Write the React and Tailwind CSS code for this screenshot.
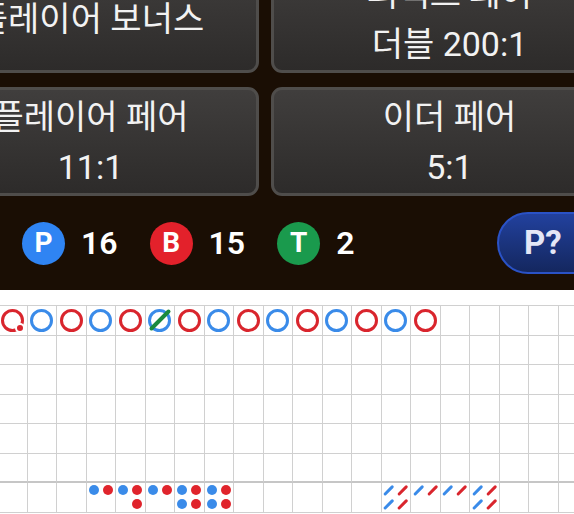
const font = { fontFamily: 'Roboto, "Noto Sans CJK KR", sans-serif' };

// big road: first row of the grid
const bigRoad = [
  { c: 'r', pair: true },
  { c: 'b' },
  { c: 'r' },
  { c: 'b' },
  { c: 'r' },
  { c: 'b', tie: true },
  { c: 'r' },
  { c: 'b' },
  { c: 'r' },
  { c: 'b' },
  { c: 'r' },
  { c: 'b' },
  { c: 'r' },
  { c: 'b' },
  { c: 'r' },
];

// small road columns (start at cell 3), cockroach columns (start at cell 13)
const smallRoad = [['b'], ['r'], ['b'], ['r', 'r'], ['b'], ['r'], ['b', 'b'], ['r', 'r'], ['b', 'b'], ['r', 'r']];
const roach = [['b', 'b'], ['r', 'r'], ['b'], ['r'], ['b'], ['r'], ['b', 'b'], ['r', 'r']];

const COLS = 20;
const ROWS = 7;

const BetButton = ({ lines }) => (
  <div className="h-[109px] rounded-[11px] border-[3px] border-[#4f4d4b] bg-linear-to-b from-[#403e3d] to-[#2d2b2a] flex flex-col items-center justify-center gap-[14px] text-[#f2f2f2] text-[34px] leading-[36px]">
    {lines.map((l) => (
      <span key={l} className="whitespace-nowrap">{l}</span>
    ))}
  </div>
);

const Badge = ({ letter, bg, count }) => (
  <div className="flex items-center gap-[16px]">
    <div className={`w-[43px] h-[43px] rounded-full ${bg} flex items-center justify-center text-white text-[28px] font-bold`}>
      {letter}
    </div>
    <span className="text-white text-[32px] font-semibold">{count}</span>
  </div>
);

const Ring = ({ c, pair, tie }) => (
  <div className="relative flex items-center justify-center">
    <div className={`w-[23px] h-[23px] rounded-full border-[3.5px] ${c === 'r' ? 'border-[#d9252d]' : 'border-[#3a8be9]'}`} />
    {tie && <div className="absolute w-[28px] h-[4px] rounded-sm bg-[#1b8a3d] -rotate-45" />}
    {pair && <div className="absolute left-[14px] top-[14px] w-[10px] h-[10px] rounded-full bg-[#d9252d] border-[2px] border-white" />}
  </div>
);

const Dot = ({ c }) => (
  <div className={`w-[10px] h-[10px] rounded-full ${c === 'r' ? 'bg-[#e0242c]' : 'bg-[#3a8be9]'}`} />
);

const Slash = ({ c }) => (
  <div className={`w-[13px] h-[2.5px] rounded-full -rotate-45 ${c === 'r' ? 'bg-[#d9252d]' : 'bg-[#3a8be9]'}`} />
);

const DerivedCell = ({ data, start, cell }) => {
  const i = cell - start;
  const cols = [data[i * 2], data[i * 2 + 1]];
  return (
    <div className="grid grid-cols-2 grid-rows-2 w-full h-full">
      {[0, 1].map((r) =>
        [0, 1].map((s) => (
          <div key={`${r}-${s}`} className="flex items-center justify-center">
            {cols[s] && cols[s][r] && (data === smallRoad ? <Dot c={cols[s][r]} /> : <Slash c={cols[s][r]} />)}
          </div>
        ))
      )}
    </div>
  );
};

export default function App() {
  return (
    <div className="w-[574px] h-[514px] overflow-hidden bg-white" style={font}>
      <div className="bg-[#1a0e04] h-[290px] overflow-hidden">
        <div className="-mt-[36px] -ml-[78px] w-[706px] grid grid-cols-[337px_357px] gap-x-[12px] gap-y-[14px]">
          <BetButton lines={['플레이어 보너스']} />
          <BetButton lines={['퍼펙트 페어', '더블 200:1']} />
          <BetButton lines={['플레이어 페어', '11:1']} />
          <BetButton lines={['이더 페어', '5:1']} />
        </div>
        <div className="h-[94px] flex items-center pl-[22px]">
          <div className="flex items-center gap-[32px]">
            <Badge letter="P" bg="bg-[#2f84f3]" count="16" />
            <Badge letter="B" bg="bg-[#e3212b]" count="15" />
            <Badge letter="T" bg="bg-[#1a9a4d]" count="2" />
          </div>
          <div className="ml-auto -mr-[60px] w-[137px] h-[62px] rounded-full border-2 border-[#2a52c6] bg-linear-to-b from-[#22419e] to-[#14275f] flex items-center pl-[25px] text-[#e4e7f6] text-[33px] font-bold">
            P?
          </div>
        </div>
      </div>
      <div className="pt-[15px] -ml-[3px]">
        <div className="grid grid-cols-[repeat(20,29.5px)] border-t-[1.5px] border-l-[1.5px] border-[#d0d0d0]">
          {Array.from({ length: ROWS * COLS }).map((_, idx) => {
            const row = Math.floor(idx / COLS);
            const col = idx % COLS;
            const last = row === ROWS - 1;
            let content = null;
            if (row === 0 && bigRoad[col]) content = <Ring {...bigRoad[col]} />;
            if (last && col >= 3 && col <= 7) content = <DerivedCell data={smallRoad} start={3} cell={col} />;
            if (last && col >= 13 && col <= 16) content = <DerivedCell data={roach} start={13} cell={col} />;
            return (
              <div
                key={idx}
                className={`h-[29.5px] border-r-[1.5px] border-[#d0d0d0] flex items-center justify-center ${
                  row === ROWS - 2 ? 'border-b-2 border-b-[#c6c6c6]' : 'border-b-[1.5px]'
                }`}
              >
                {content}
              </div>
            );
          })}
        </div>
      </div>
    </div>
  );
}
